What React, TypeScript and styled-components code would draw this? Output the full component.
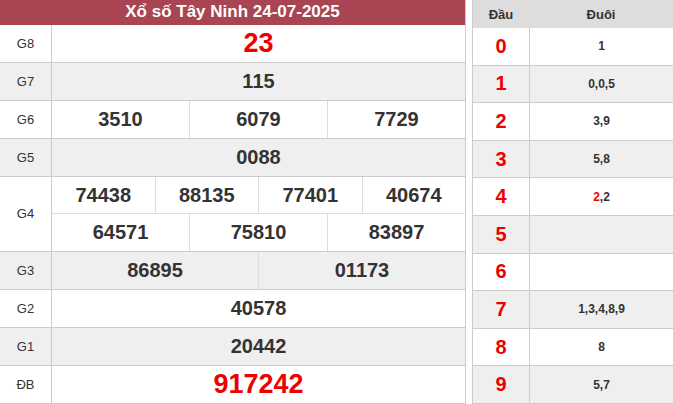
import React from "react";
import styled, { createGlobalStyle } from "styled-components";

const G = createGlobalStyle`
  html, body { margin: 0; padding: 0; background: #fff; font-family: "Liberation Sans", Arial, sans-serif; }
`;
const Page = styled.div`display: flex; width: 673px; height: 404px; overflow: hidden;`;
const Left = styled.div`width: 466px; display: flex; flex-direction: column; border-right: 1px solid #ccc; box-sizing: border-box;`;
const Title = styled.div`height: 25px; background: #a94452; color: #fff; font-weight: bold; font-size: 17px; display: flex; align-items: center; justify-content: center; box-sizing: border-box;`;
const Row = styled.div<{ $gray?: boolean; $h?: number }>`
  display: flex; height: ${p => p.$h ?? 38}px; background: ${p => (p.$gray ? "#efefef" : "#fff")};
  border-bottom: 1px solid #ccc; box-sizing: border-box;
`;
const Label = styled.div`width: 51px; border-right: 1px solid #ccc; display: flex; align-items: center; justify-content: center; font-size: 13px; color: #333; flex-shrink: 0;`;
const Cells = styled.div`flex: 1; display: flex; flex-direction: column;`;
const Line = styled.div<{ $last?: boolean }>`flex: 1; display: flex; ${p => (p.$last ? "" : "border-bottom: 1px solid #ddd;")}`;
const Cell = styled.div<{ $red?: boolean }>`
  flex: 1; display: flex; align-items: center; justify-content: center;
  font-weight: bold; font-size: ${p => (p.$red ? 27 : 20)}px; color: ${p => (p.$red ? "#e00" : "#333")};
  & + & { border-left: 1px solid #ddd; }
`;
const Right = styled.div`margin-left: 6px; flex: 1; display: flex; flex-direction: column; border-left: 1px solid #ccc;`;
const RHead = styled.div`height: 28px; background: #ddd; display: flex; font-weight: bold; font-size: 13px; color: #333;`;
const RRow = styled.div<{ $gray?: boolean }>`display: flex; height: 37.6px; background: ${p => (p.$gray ? "#efefef" : "#fff")}; border-bottom: 1px solid #ccc; box-sizing: border-box;`;
const Dau = styled.div<{ $head?: boolean }>`width: 56px; display: flex; align-items: center; justify-content: center; ${p => (p.$head ? "" : "border-right: 1px solid #ccc; color: #e00; font-weight: bold; font-size: 20px;")}`;
const Duoi = styled.div`flex: 1; display: flex; align-items: center; justify-content: center; font-weight: bold; font-size: 12px; color: #333;`;
const Red = styled.span`color: #e00;`;

const rows: { l: string; lines: string[][]; red?: boolean }[] = [
  { l: "G8", lines: [["23"]], red: true },
  { l: "G7", lines: [["115"]] },
  { l: "G6", lines: [["3510", "6079", "7729"]] },
  { l: "G5", lines: [["0088"]] },
  { l: "G4", lines: [["74438", "88135", "77401", "40674"], ["64571", "75810", "83897"]] },
  { l: "G3", lines: [["86895", "01173"]] },
  { l: "G2", lines: [["40578"]] },
  { l: "G1", lines: [["20442"]] },
  { l: "ĐB", lines: [["917242"]], red: true },
];
const duoi: React.ReactNode[] = ["1", "0,0,5", "3,9", "5,8", <><Red>2</Red>,2</>, "", "", "1,3,4,8,9", "8", "5,7"];

export default function App() {
  return (
    <Page>
      <G />
      <Left>
        <Title>Xổ số Tây Ninh 24-07-2025</Title>
        {rows.map((r, i) => (
          <Row key={r.l} $gray={i % 2 === 1 && r.l !== "G4"} $h={r.lines.length * 38}>
            <Label>{r.l}</Label>
            <Cells>
              {r.lines.map((ln, j) => (
                <Line key={j} $last={j === r.lines.length - 1}>
                  {ln.map(n => <Cell key={n} $red={r.red}>{n}</Cell>)}
                </Line>
              ))}
            </Cells>
          </Row>
        ))}
      </Left>
      <Right>
        <RHead><Dau $head>Đầu</Dau><Duoi style={{ fontSize: 13 }}>Đuôi</Duoi></RHead>
        {duoi.map((d, i) => (
          <RRow key={i} $gray={i % 2 === 1}>
            <Dau>{i}</Dau>
            <Duoi>{d}</Duoi>
          </RRow>
        ))}
      </Right>
    </Page>
  );
}
